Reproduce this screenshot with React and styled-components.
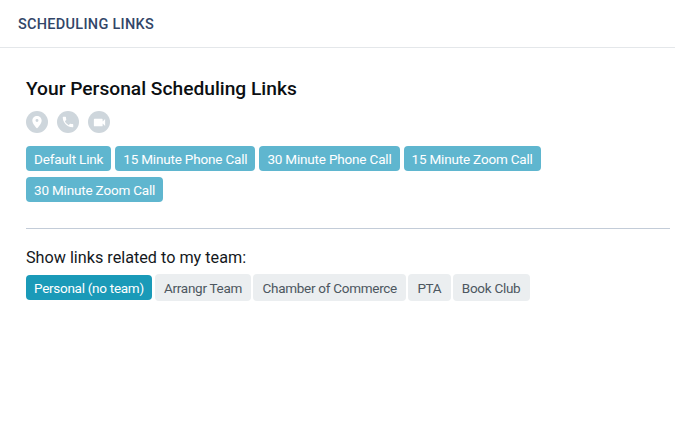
import React from 'react';
import styled, { createGlobalStyle } from 'styled-components';

const GlobalStyle = createGlobalStyle`
  html, body { margin: 0; padding: 0; background: #fff; overflow: hidden; }
  body { font-family: Roboto, "Open Sans", sans-serif; }
`;

const Page = styled.div`
  width: 675px;
  height: 425px;
`;

const TopBar = styled.header`
  height: 46px;
  padding: 1px 0 0 18px;
  display: flex;
  align-items: center;
  border-bottom: 1px solid #e4e7ea;
`;

const TopTitle = styled.h1`
  margin: 0;
  font-size: 14.5px;
  font-weight: 500;
  letter-spacing: 0.28px;
  color: #324668;
`;

const Content = styled.main`
  padding: 28px 5px 0 26px;
`;

const Heading = styled.h2`
  margin: 0;
  font-size: 19.2px;
  line-height: 26px;
  font-weight: 500;
  color: #0c0f12;
`;

const IconRow = styled.div`
  display: flex;
  gap: 9px;
  margin-top: 9px;
`;

const IconCircle = styled.span`
  width: 22px;
  height: 22px;
  border-radius: 50%;
  background: #ced6dc;
  display: flex;
  align-items: center;
  justify-content: center;
`;

const LinkList = styled.div`
  display: flex;
  flex-wrap: wrap;
  gap: 6px 4px;
  margin-top: 13px;
  width: 560px;
`;

const Chip = styled.span`
  height: 25px;
  box-sizing: border-box;
  padding: 0 8px;
  display: flex;
  align-items: center;
  border-radius: 4px;
  font-size: 13.5px;
  letter-spacing: -0.18px;
  white-space: nowrap;
  color: #fff;
  background: #5fb6cf;
`;

const Divider = styled.hr`
  margin: 26px 0 0;
  border: 0;
  height: 1px;
  background: #c3ccd8;
`;

const Label = styled.p`
  margin: 19px 0 0;
  font-size: 16.2px;
  line-height: 20px;
  color: #14181c;
`;

const TeamList = styled.div`
  display: flex;
  align-items: center;
  gap: 2px;
  margin-top: 6px;
`;

const TeamChip = styled(Chip)`
  height: ${p => (p.$active ? '25px' : '27px')};
  margin-right: ${p => (p.$active ? '1px' : '0')};
  letter-spacing: -0.28px;
  color: ${p => (p.$active ? '#fff' : '#4d5760')};
  background: ${p => (p.$active ? '#1a9ab8' : '#ebeef0')};
  padding: 0 ${p => (p.$active ? '8px' : '9.2px')};
`;

const PinIcon = () => (
  <svg width="14" height="14" viewBox="0 0 24 24" fill="#fff">
    <path fillRule="evenodd" d="M12 1.5c-4.400 0-8 3.500-8 7.900 0 5.500 6.600 12.200 7.300 12.900.4.4 1 .4 1.400 0 .7-.7 7.300-7.400 7.300-12.900 0-4.400-3.600-7.900-8-7.900zm0 10.500a2.500 2.500 0 1 1 0-5 2.500 2.500 0 0 1 0 5z" />
  </svg>
);

const PhoneIcon = () => (
  <svg width="14" height="14" viewBox="0 0 24 24" fill="#fff">
    <path d="M6.62 10.79c1.44 2.83 3.76 5.14 6.59 6.59l2.2-2.2c.27-.27.67-.36 1.02-.24 1.12.37 2.33.57 3.57.57.55 0 1 .45 1 1V20c0 .55-.45 1-1 1-9.39 0-17-7.61-17-17 0-.55.45-1 1-1h3.5c.55 0 1 .45 1 1 0 1.25.2 2.45.57 3.57.11.35.03.74-.25 1.02l-2.2 2.2z" />
  </svg>
);

const VideoIcon = () => (
  <svg width="15" height="15" viewBox="0 0 24 24" fill="#fff">
    <path d="M17 10.5V7c0-.55-.45-1-1-1H4c-.55 0-1 .45-1 1v10c0 .55.45 1 1 1h12c.55 0 1-.45 1-1v-3.500l4 4v-11l-4 4z" />
  </svg>
);

const links = [
  'Default Link',
  '15 Minute Phone Call',
  '30 Minute Phone Call',
  '15 Minute Zoom Call',
  '30 Minute Zoom Call',
];

const teams = ['Personal (no team)', 'Arrangr Team', 'Chamber of Commerce', 'PTA', 'Book Club'];

const App = () => (
  <Page>
    <GlobalStyle />
    <TopBar>
      <TopTitle>SCHEDULING LINKS</TopTitle>
    </TopBar>
    <Content>
      <Heading>Your Personal Scheduling Links</Heading>
      <IconRow>
        <IconCircle><PinIcon /></IconCircle>
        <IconCircle><PhoneIcon /></IconCircle>
        <IconCircle><VideoIcon /></IconCircle>
      </IconRow>
      <LinkList>
        {links.map(link => <Chip key={link}>{link}</Chip>)}
      </LinkList>
      <Divider />
      <Label>Show links related to my team:</Label>
      <TeamList>
        {teams.map((team, i) => <TeamChip key={team} $active={i === 0}>{team}</TeamChip>)}
      </TeamList>
    </Content>
  </Page>
);

export default App;
